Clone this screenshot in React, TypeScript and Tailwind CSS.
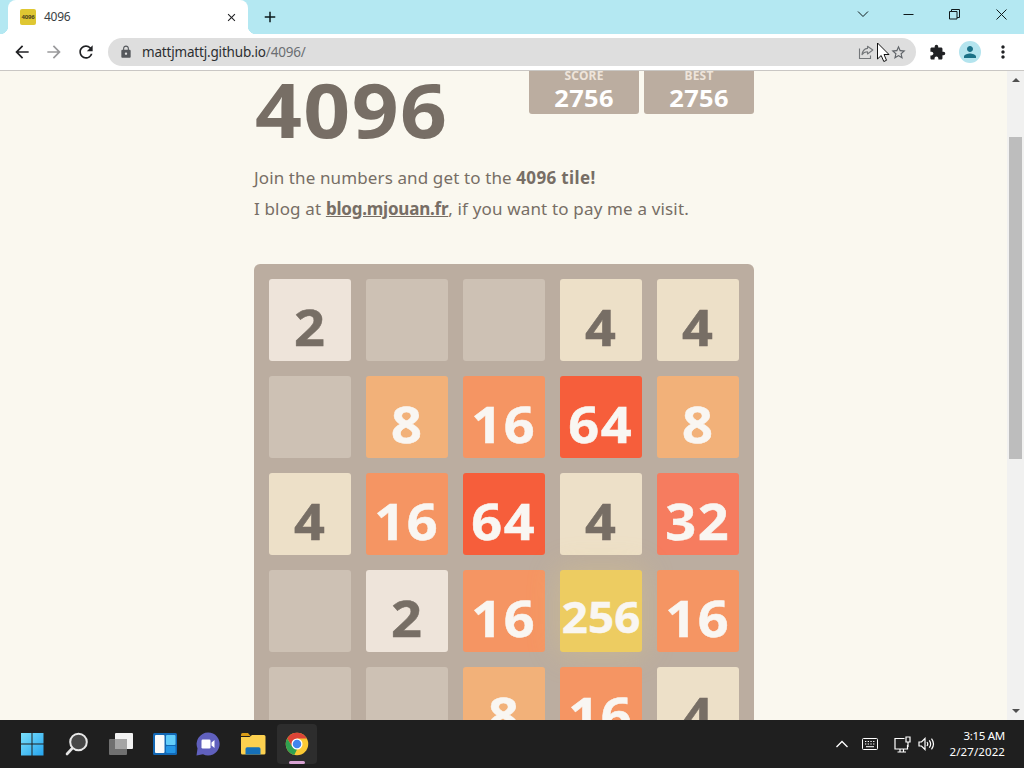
import React from 'react';
import clsx from 'clsx';
import {
  MdAdd,
  MdArrowBack,
  MdArrowForward,
  MdClose,
  MdExtension,
  MdLock,
  MdMoreVert,
  MdPerson,
  MdRefresh,
  MdStarBorder,
} from 'react-icons/md';

const BOARD = [
  [2, 0, 0, 4, 4],
  [0, 8, 16, 64, 8],
  [4, 16, 64, 4, 32],
  [0, 2, 16, 256, 16],
  [0, 0, 8, 16, 4],
];

const TILE_STYLES: Record<number, string> = {
  0: 'bg-[#cdc1b4]',
  2: 'bg-[#eee4da] text-[#776e65]',
  4: 'bg-[#ede0c8] text-[#776e65]',
  8: 'bg-[#f2b179] text-[#f9f6f2]',
  16: 'bg-[#f59563] text-[#f9f6f2]',
  32: 'bg-[#f67c5f] text-[#f9f6f2]',
  64: 'bg-[#f65e3b] text-[#f9f6f2]',
  256: 'bg-[#edcc61] text-[#f9f6f2] shadow-[0_0_30px_4px_rgba(243,215,116,0.24)]',
};

function Tile({ value }: { value: number }) {
  return (
    <div
      className={clsx(
        'flex h-[82px] w-[82px] items-center justify-center rounded-[3px] font-bold leading-none',
        value > 99 ? 'pt-[11px] text-[43px] tracking-[0.2px]' : 'pt-[13px] text-[51px] tracking-[1.5px]',
        TILE_STYLES[value]
      )}
    >
      {value > 0 && (
        <span
          className={clsx(
            'inline-block [-webkit-text-stroke:0.5px_currentColor]',
            value > 99 ? 'scale-x-[1.06]' : 'scale-x-[1.06]'
          )}
        >
          {value}
        </span>
      )}
    </div>
  );
}

function ScoreBox({ label, value }: { label: string; value: number }) {
  return (
    <div className="flex h-[55px] w-[110px] flex-col items-center rounded-[3px] bg-[#bbada0] pt-[10px] leading-none">
      <span className="text-[12px] font-bold leading-[14px] tracking-[0.2px] text-[#eee4da]">{label}</span>
      <span className="mt-[2px] inline-block scale-x-[1.06] text-[24px] font-bold leading-[26px] tracking-[0.3px] text-white">
        {value}
      </span>
    </div>
  );
}

function TabStrip() {
  return (
    <div className="flex h-[34px] bg-[#b4e8f2]">
      <div className="relative ml-2 flex h-full w-[240px] items-center rounded-t-lg bg-white pl-3 pr-[10px]">
        <div className="absolute -left-2 bottom-0 h-2 w-2 bg-[radial-gradient(circle_at_0_0,#b4e8f2_8px,#fff_8.5px)]" />
        <div className="absolute -right-2 bottom-0 h-2 w-2 bg-[radial-gradient(circle_at_100%_0,#b4e8f2_8px,#fff_8.5px)]" />
        <div className="flex h-4 w-4 items-center justify-center rounded-[2px] bg-[#dfc732] text-[6px] font-bold tracking-[-0.2px] text-[#4c4420]">
          4096
        </div>
        <span className="ml-2 text-[12px] tracking-[-0.3px] text-[#3a3f44]">4096</span>
        <MdClose className="ml-auto h-[13px] w-[13px] text-[#202124]" />
      </div>
      <MdAdd className="ml-[13px] mt-[8px] h-[18px] w-[18px] text-[#0d1a1d]" />
      <div className="ml-auto flex items-start text-[#101a1c]">
        <svg className="mr-[34px] mt-[10px]" width="12" height="9" viewBox="0 0 12 9" fill="none" stroke="currentColor">
          <path d="M1 1.5 6 6.5 11 1.5" />
        </svg>
        <svg className="mr-[35px] mt-[9px]" width="11" height="11" viewBox="0 0 11 11" stroke="currentColor">
          <path d="M0.5 5.5h10" />
        </svg>
        <svg className="mr-[36px] mt-[9px]" width="11" height="11" viewBox="0 0 11 11" fill="none" stroke="currentColor">
          <path d="M0.5 2.5h7.5v7.5h-7.5zM2.5 2.5v-2h8v8h-2.5" />
        </svg>
        <svg className="mr-[17px] mt-[9px]" width="11" height="11" viewBox="0 0 11 11" stroke="currentColor">
          <path d="M0.5 0.5l10 10M10.5 0.5l-10 10" />
        </svg>
      </div>
    </div>
  );
}

function Toolbar() {
  return (
    <div className="flex h-[37px] items-center border-b border-[#c9c7c4] bg-white">
      <MdArrowBack className="ml-[12px] h-5 w-5 text-[#202124]" />
      <MdArrowForward className="ml-[12px] h-5 w-5 text-[#9a9a9c]" />
      <MdRefresh className="ml-[12px] h-5 w-5 text-[#202124]" />
      <div className="ml-[12px] flex h-7 w-[808px] items-center rounded-full bg-[#dedede] pl-[11px] pr-[9px]">
        <MdLock className="h-[14px] w-[14px] text-[#55585c]" />
        <span className="ml-[9px] text-[13.5px] leading-5 tracking-[-0.18px] text-[#2c2e31]">
          mattjmattj.github.io<span className="text-[#6b6e72]">/4096/</span>
        </span>
        <svg className="ml-auto" width="16" height="16" viewBox="0 0 16 16" fill="none" stroke="#74777a" strokeWidth="1.1">
          <path d="M1.5 4.5v10h11v-3" />
          <path d="M9.5 2.2 14.8 6 9.5 10V7.8C7 7.8 5.3 8.6 4 10.6 4.5 7 6.5 4.7 9.5 4.4z" strokeLinejoin="round" />
        </svg>
        <MdStarBorder className="ml-[16px] h-[17px] w-[17px] text-[#5f6368]" />
      </div>
      <MdExtension className="ml-[13px] h-[17px] w-[17px] text-[#202124]" />
      <div className="ml-[13px] flex h-[22px] w-[22px] items-center justify-center rounded-full bg-[#b4e4ee]">
        <MdPerson className="h-[18px] w-[18px] text-[#1b7187]" />
      </div>
      <MdMoreVert className="ml-[12px] h-5 w-5 text-[#202124]" />
    </div>
  );
}

function Scrollbar() {
  return (
    <div className="flex w-[17px] flex-col items-center bg-[#f1f1f0]">
      <svg className="mt-[7px]" width="8" height="4" viewBox="0 0 8 4" fill="#505050">
        <path d="M4 0 8 4H0z" />
      </svg>
      <div className="mt-[55px] h-[322px] w-[13px] bg-[#bdbdbd]" />
      <svg className="mb-[7px] mt-auto" width="8" height="4" viewBox="0 0 8 4" fill="#505050">
        <path d="M4 4 8 0H0z" />
      </svg>
    </div>
  );
}

function GamePage() {
  return (
    <div className="flex flex-1 justify-center overflow-hidden bg-[#faf8ef] text-[#776e65]">
      <div className="mr-[-1px] w-[500px] shrink-0">
        <div className="-mt-3 flex h-[83px] justify-between">
          <h1 className="ml-px origin-left scale-x-[1.08] text-[76px] font-bold leading-[99px] tracking-[1.3px]">4096</h1>
          <div className="flex gap-[5px]">
            <ScoreBox label="SCORE" value={2756} />
            <ScoreBox label="BEST" value={2756} />
          </div>
        </div>
        <div className="mt-[20px] text-[17px] leading-[31px]">
          <p className="whitespace-nowrap tracking-[0.12px]">
            Join the numbers and get to the <strong className="tracking-[0.35px]">4096 tile!</strong>
          </p>
          <p className="whitespace-nowrap tracking-[0.16px]">
            I blog at <a className="font-bold tracking-[-0.22px] underline">blog.mjouan.fr</a>, if you want to pay me a visit.
          </p>
        </div>
        <div className="mt-[40px] grid h-[500px] grid-cols-5 content-start gap-[15px] rounded-md bg-[#bbada0] p-[15px]">
          {BOARD.flat().map((value, i) => (
            <Tile key={i} value={value} />
          ))}
        </div>
      </div>
    </div>
  );
}

function WindowsIcon() {
  return (
    <svg width="24" height="24" viewBox="0 0 24 24">
      <defs>
        <linearGradient id="win" x1="0" y1="0" x2="1" y2="1" gradientUnits="objectBoundingBox">
          <stop offset="0" stopColor="#7be0fb" />
          <stop offset="1" stopColor="#25a4ee" />
        </linearGradient>
      </defs>
      <path fill="url(#win)" d="M1 1h10.5v10.5H1zM12.5 1H23.5v10.5h-11zM1 12.5h10.5v11H1zM12.5 12.5h11v11h-11z" />
    </svg>
  );
}

function SearchIcon() {
  return (
    <svg width="24" height="24" viewBox="0 0 24 24" fill="none">
      <path d="M2 22 8 15.5" stroke="#e4e4e4" strokeWidth="2.6" strokeLinecap="round" />
      <circle cx="13.5" cy="10" r="8.3" fill="#474747" stroke="#e8e8e8" strokeWidth="2" />
    </svg>
  );
}

function TaskViewIcon() {
  return (
    <svg width="26" height="24" viewBox="0 0 26 24">
      <rect x="7" y="1" width="18" height="16" rx="1" fill="#f1f1f1" />
      <rect x="1" y="7" width="18" height="16" rx="1" fill="#707070" />
      <path d="M7 7h12v10H7z" fill="#a5a5a5" />
    </svg>
  );
}

function WidgetsIcon() {
  return (
    <svg width="26" height="24" viewBox="0 0 26 24">
      <rect x="1" y="1" width="24" height="22" rx="1.5" fill="#1267b4" />
      <rect x="3" y="3" width="9.5" height="18" rx="1" fill="#fafafa" />
      <rect x="14" y="3" width="9.5" height="10" rx="1" fill="#62cdfa" />
      <rect x="14" y="14" width="9.5" height="7" rx="1" fill="#2496e6" />
    </svg>
  );
}

function ChatIcon() {
  return (
    <svg width="26" height="24" viewBox="0 0 26 24">
      <path d="M13 0.5A11.5 11.5 0 1 1 8 22.3L1.5 23.5 2.5 16.5A11.5 11.5 0 0 1 13 0.5z" fill="#6060bd" />
      <rect x="6.5" y="7.5" width="9" height="9" rx="1.2" fill="#fff" />
      <path d="M16.5 10.5 19.5 8v8l-3-2.5z" fill="#fff" />
    </svg>
  );
}

function ExplorerIcon() {
  return (
    <svg width="26" height="24" viewBox="0 0 26 24">
      <path d="M1 2.5Q1 1 2.5 1H8l2.5 3H1z" fill="#d99b16" />
      <path d="M1 5h8.5L12 3h12q1.5 0 1.5 1.5V21q0 1.500-1.500 1.500H2.500Q1 22.500 1 21z" fill="#fcd04f" />
      <path d="M5.5 22.5V17q0-1.700 1.700-1.700h11.600q1.700 0 1.700 1.700v5.500z" fill="#1570b8" />
    </svg>
  );
}

function ChromeIcon() {
  return (
    <svg width="24" height="24" viewBox="0 0 48 48">
      <circle cx="24" cy="24" r="22.5" fill="#fbc934" />
      <path d="M24 13h19.5A22.5 22.5 0 0 0 4.5 12.75L14.5 29.5z" fill="#dc4437" />
      <path d="M4.5 12.75 14.5 29.5 24 35l-5.5 10.8A22.5 22.5 0 0 1 4.5 12.75z" fill="#30a151" />
      <circle cx="24" cy="24" r="11" fill="#fff" />
      <circle cx="24" cy="24" r="8.5" fill="#4285ed" />
    </svg>
  );
}

function Taskbar() {
  return (
    <div className="flex h-12 items-center bg-[#1f1f1f] text-white">
      <div className="ml-[20px] flex items-center">
        <WindowsIcon />
        <div className="ml-[21px]"><SearchIcon /></div>
        <div className="ml-[19px]"><TaskViewIcon /></div>
        <div className="ml-[18px]"><WidgetsIcon /></div>
        <div className="ml-[17px]"><ChatIcon /></div>
        <div className="ml-[19px]"><ExplorerIcon /></div>
        <div className="relative ml-[11px] flex h-10 w-10 items-center justify-center rounded bg-[#2d2d2d]">
          <ChromeIcon />
          <div className="absolute bottom-0 left-3 h-[3px] w-4 rounded-full bg-[#d8a3d3]" />
        </div>
      </div>
      <div className="ml-auto flex items-center">
        <svg width="12" height="8" viewBox="0 0 12 8" fill="none" stroke="#fff" strokeWidth="1.3">
          <path d="M0.5 7 6 1.5 11.5 7" />
        </svg>
        <svg className="ml-[14px]" width="16" height="12" viewBox="0 0 16 12" fill="none" stroke="#fff">
          <rect x="0.5" y="0.5" width="15" height="11" rx="1" />
          <path d="M3 3.5h10M3 6h10" strokeWidth="1.2" strokeDasharray="1.3 1.4" />
          <path d="M4 8.7h8" />
        </svg>
        <svg className="ml-[16px]" width="17" height="17" viewBox="0 0 17 17" fill="none" stroke="#fff" strokeWidth="1.2">
          <path d="M10.5 2.5H1v10.5h12.5V9M6 13v3M9.5 13v3M3.5 16h8.5" />
          <path d="M12 1h4v5h-4zM14 6v5" />
        </svg>
        <svg className="ml-[7px]" width="17" height="14" viewBox="0 0 17 14" fill="none" stroke="#fff" strokeWidth="1.2">
          <path d="M1 5h2.5L7 1.5v11L3.5 9H1zM9 5q1.5 2 0 4M11.3 3.3q2.7 3.7 0 7.4M13.5 1.7q4 5.3 0 10.6" />
        </svg>
        <div className="ml-[10px] mr-[19px] w-[60px] whitespace-nowrap text-right text-[11.5px] leading-4 tracking-[-0.3px]">
          <div>3:15 AM</div>
          <div className="tracking-[0.1px]">2/27/2022</div>
        </div>
      </div>
    </div>
  );
}

export default function App() {
  return (
    <div className="relative flex h-[768px] w-[1024px] flex-col overflow-hidden font-['Noto_Sans',sans-serif]">
      <TabStrip />
      <Toolbar />
      <div className="flex min-h-0 flex-1">
        <GamePage />
        <Scrollbar />
      </div>
      <Taskbar />

      {/* Mouse pointer */}
      <svg className="absolute left-[877px] top-[42px]" width="13" height="21" viewBox="0 0 13 21">
        <path d="M0.5 1v16l3.7-3.5 2.6 6 2.7-1.2L7 12.5h5z" fill="#fff" stroke="#111" />
      </svg>
    </div>
  );
}
